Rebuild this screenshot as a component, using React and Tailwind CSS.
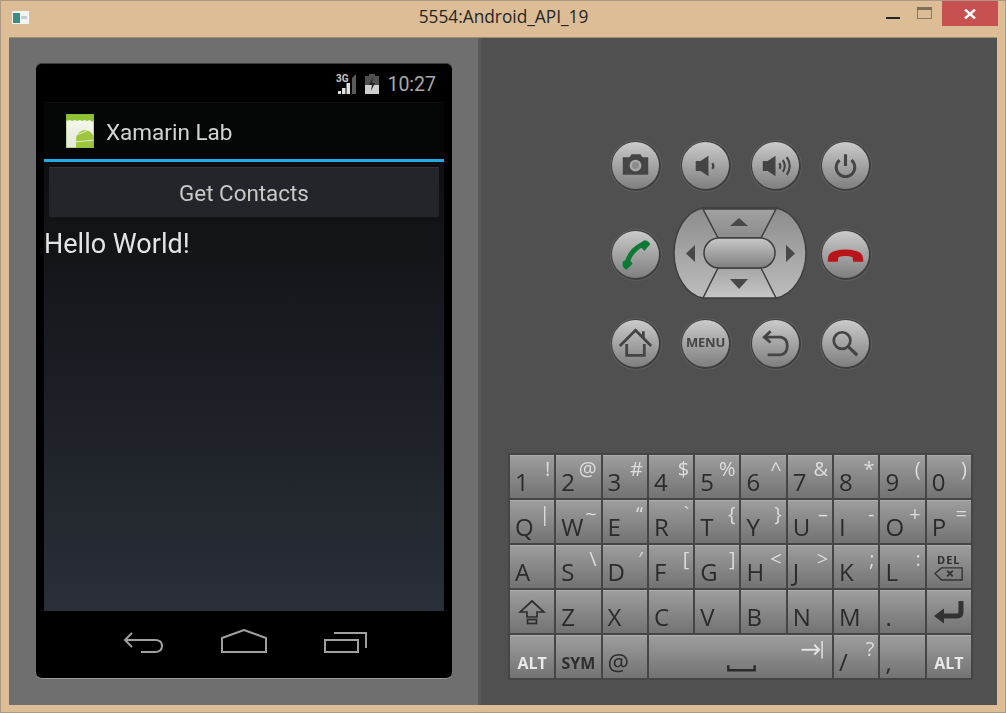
import React from "react";

const Ic = ({ children, className = "" }) => (
  <svg viewBox="0 0 48 48" width="48" height="48" className={className}>{children}</svg>
);

const Round = ({ children }) => (
  <div className="flex items-center justify-center">
    <div className="w-[52px] h-[52px] rounded-full bg-[#5f5f5f] flex items-center justify-center">
      <div className="w-[50px] h-[50px] rounded-full bg-[#3f3f3f] flex items-center justify-center">
        <div className="w-[47px] h-[47px] rounded-full bg-gradient-to-b from-[#cbcbcb] to-[#7f7f7f] flex items-center justify-center">
          {children}
        </div>
      </div>
    </div>
  </div>
);

const Camera = () => (
  <Ic>
    <path d="M11 15h7l2-3h9l2 3h6v18H11z" fill="#454545" />
    <circle cx="24" cy="23.5" r="6" fill="#a8a8a8" />
    <circle cx="24" cy="23.5" r="3.5" fill="#8b8b8b" />
  </Ic>
);
const VolDown = () => (
  <Ic>
    <path d="M14 19h5l8-5.500v21l-8-5.500h-5z" fill="#444" />
    <path d="M31 21q2 3 0 6" stroke="#444" strokeWidth="2.300" fill="none" />
  </Ic>
);
const VolUp = () => (
  <Ic>
    <path d="M11 19h5l8-5.500v21l-8-5.500h-5z" fill="#444" />
    <path d="M28 21q2 3 0 6M31.500 18q4 6 0 12M35.500 15q6 9 0 18" stroke="#444" strokeWidth="2.200" fill="none" />
  </Ic>
);
const Power = () => (
  <Ic>
    <path d="M18 18a9.500 9.500 0 1 0 12 0" stroke="#444" strokeWidth="3" fill="none" />
    <path d="M24 12v12" stroke="#444" strokeWidth="3.200" fill="none" />
  </Ic>
);
const Call = () => (
  <Ic>
    <path d="M15 34Q18 19 32 13" stroke="#0c7a34" strokeWidth="5" fill="none" />
    <path d="M27 13L33 9Q37 9 39 13L33 20Z" fill="#0c7a34" />
    <path d="M11 31L17 27L21 33L15 39Q10 38 11 31Z" fill="#0c7a34" />
  </Ic>
);
const EndCall = () => (
  <Ic>
    <path d="M6 31Q5 22 13 20Q24 17 35 20Q43 22 42 31H32L31 26Q24 24 17 26L16 31Z" fill="#b8141a" />
  </Ic>
);
const Home = () => (
  <Ic>
    <path d="M8 26 24 10l16 16" stroke="#444" strokeWidth="2.800" fill="none" />
    <path d="M32 18v-7" stroke="#444" strokeWidth="2.800" fill="none" />
    <path d="M15 24v11.500h18V24" stroke="#444" strokeWidth="2.800" fill="none" />
  </Ic>
);
const Back = () => (
  <Ic>
    <path d="M19 11l-6.500 6 6.500 5.500" stroke="#444" strokeWidth="2.800" fill="none" />
    <path d="M12.500 17H29q7 1 7 9t-7 9H16" stroke="#444" strokeWidth="2.800" fill="none" />
  </Ic>
);
const Search = () => (
  <Ic>
    <circle cx="20.500" cy="20.500" r="8.500" stroke="#444" strokeWidth="2.800" fill="none" />
    <path d="M27 27l9 8.500" stroke="#444" strokeWidth="3.200" fill="none" />
  </Ic>
);

const DPad = () => (
  <svg viewBox="0 0 134 93" width="134" height="93" className="mt-[-2px] ml-[-2px]">
    <defs>
      <linearGradient id="dl" x1="0" y1="0" x2="0" y2="1">
        <stop offset="0" stopColor="#8c8c8c" />
        <stop offset="1" stopColor="#bdbdbd" />
      </linearGradient>
      <linearGradient id="dt" x1="0" y1="0" x2="0" y2="1">
        <stop offset="0" stopColor="#a2a2a2" />
        <stop offset="1" stopColor="#8b8b8b" />
      </linearGradient>
      <linearGradient id="db" x1="0" y1="0" x2="0" y2="1">
        <stop offset="0" stopColor="#a6a6a6" />
        <stop offset="1" stopColor="#c6c6c6" />
      </linearGradient>
      <linearGradient id="dc" x1="0" y1="0" x2="0" y2="1">
        <stop offset="0" stopColor="#c8c8c8" />
        <stop offset="1" stopColor="#7f7f7f" />
      </linearGradient>
    </defs>
    <path d="M30 1H103C120 4 133 24 133 46C133 68 120 88 103 91H30C13 88 1 68 1 46C1 24 13 4 30 1Z" fill="url(#dl)" stroke="#3f3f3f" strokeWidth="1.500" />
    <path d="M30 2H103L88 31H45Z" fill="url(#dt)" stroke="#3f3f3f" strokeWidth="1.500" />
    <path d="M45 61H88L103 91H30Z" fill="url(#db)" stroke="#3f3f3f" strokeWidth="1.500" />
    <rect x="31" y="31" width="71" height="30" rx="15" fill="url(#dc)" stroke="#3f3f3f" strokeWidth="1.500" />
    <path d="M57 19h18l-9-8zM57 72h18l-9 10zM22 38v17l-9-8.500zM113 38v17l9-8.500z" fill="#484848" />
  </svg>
);

const KEYS = [
  [["1", "!"], ["2", "@"], ["3", "#"], ["4", "$"], ["5", "%"], ["6", "^"], ["7", "&"], ["8", "*"], ["9", "("], ["0", ")"]],
  [["Q", "|"], ["W", "~"], ["E", "“"], ["R", "`"], ["T", "{"], ["Y", "}"], ["U", "–"], ["I", "-"], ["O", "+"], ["P", "="]],
  [["A", ""], ["S", "\\"], ["D", "′"], ["F", "["], ["G", "]"], ["H", "<"], ["J", ">"], ["K", ";"], ["L", ":"]],
  [["Z", ""], ["X", ""], ["C", ""], ["V", ""], ["B", ""], ["N", ""], ["M", ""], [".", ""]],
];

const Key = ({ children, className = "" }) => (
  <div className={`h-[43px] bg-gradient-to-b from-[#9d9d9d] to-[#737373] border-t border-[#adadad] overflow-hidden ${className}`}>
    {children}
  </div>
);

const CharKey = ({ m, a }) => (
  <Key className="flex justify-between pl-[5px] pr-[4px]">
    <span className="self-end pb-[4px] text-[24px] leading-none text-[#2b2b2b]">{m}</span>
    <span className="self-start pt-[3px] text-[20px] leading-none text-[#dcdcdc]">{a}</span>
  </Key>
);

const BoldKey = ({ label, light }) => (
  <Key className="flex items-end justify-center pb-[7px]">
    <span className={`text-[16px] leading-none font-bold ${light ? "text-[#e8e8e8]" : "text-[#2e2e2e]"}`}>{label}</span>
  </Key>
);

const Keyboard = () => (
  <div className="mt-[65px] bg-[#454545] p-[2px] grid grid-cols-10 gap-x-[2px] gap-y-[2px] w-[465px] font-['Open_Sans',sans-serif]">
    {KEYS[0].map(([m, a]) => <CharKey key={m} m={m} a={a} />)}
    {KEYS[1].map(([m, a]) => <CharKey key={m} m={m} a={a} />)}
    {KEYS[2].map(([m, a]) => <CharKey key={m} m={m} a={a} />)}
    <Key className="flex flex-col items-center justify-center">
      <span className="text-[11px] leading-none font-bold text-[#2e2e2e] tracking-[1px]">DEL</span>
      <svg viewBox="0 0 32 16" width="30" height="15" className="mt-[1px]">
        <path d="M1 8l7-6h22v13H8z" fill="none" stroke="#333" strokeWidth="1.500" />
        <path d="M14 5l6 6M20 5l-6 6" stroke="#333" strokeWidth="2" />
      </svg>
    </Key>
    <Key className="flex items-center justify-center">
      <svg viewBox="0 0 28 28" width="28" height="28">
        <path d="M14 3L2 14h7v5h10v-5h7z" fill="none" stroke="#2e2e2e" strokeWidth="1.700" />
        <rect x="9.500" y="21.500" width="9" height="4" fill="none" stroke="#2e2e2e" strokeWidth="1.700" />
      </svg>
    </Key>
    {KEYS[3].map(([m]) => <CharKey key={m} m={m} a="" />)}
    <Key className="flex items-center justify-center">
      <svg viewBox="0 0 32 28" width="32" height="28">
        <path d="M28 3v11q0 4-4 4H8" fill="none" stroke="#333" strokeWidth="5" />
        <path d="M1 18l10-7.500v15z" fill="#333" />
      </svg>
    </Key>
    <BoldKey label="ALT" light />
    <BoldKey label="SYM" />
    <CharKey m="@" a="" />
    <Key className="col-span-4 flex flex-col items-center">
      <svg viewBox="0 0 184 43" width="184" height="43">
        <path d="M79 30v5h27v-5" fill="none" stroke="#2b2b2b" strokeWidth="2.500" />
        <path d="M154 14h18M167 9l5 5-5 5" fill="none" stroke="#e4e4e4" strokeWidth="2" />
        <path d="M175 5v18" stroke="#e4e4e4" strokeWidth="1.500" />
      </svg>
    </Key>
    <CharKey m="/" a="?" />
    <CharKey m="," a="" />
    <BoldKey label="ALT" light />
  </div>
);

const StatusBar = () => (
  <div className="h-[38px] flex items-center justify-end pr-[8px] gap-[7px] font-['Roboto',sans-serif]">
    <svg viewBox="0 0 22 22" width="22" height="22" className="mt-[2px]">
      <text x="0" y="9" fontSize="10" fontWeight="700" fill="#c8c8c8" fontFamily="Roboto">3G</text>
      <path d="M2 21h3v-3H2zM6 21h3.500v-6H6zM10.500 21H14V10h-3.500z" fill="#e0e0e0" />
      <path d="M16 21h4V1l-4 4z" fill="#5a5a5a" />
    </svg>
    <svg viewBox="0 0 14 20" width="14" height="20" className="mt-[2px]">
      <path d="M4 0h6v2h4v18H0V2h4z" fill="#505050" />
      <path d="M0 11h14v9H0z" fill="#cfcfcf" />
      <path d="M8 3L4 11h3l-1 6 4-8H7z" fill="#222" />
    </svg>
    <span className="ml-[1px] text-[19.500px] leading-none text-[#a8a8a8] mt-[3px]">10:27</span>
  </div>
);

const AppIcon = () => (
  <svg viewBox="0 0 28 34" width="28" height="34">
    <defs>
      <linearGradient id="ai" x1="0" y1="0" x2="0" y2="1">
        <stop offset="0" stopColor="#f8faf0" />
        <stop offset="1" stopColor="#e2e8d8" />
      </linearGradient>
    </defs>
    <rect width="28" height="34" fill="url(#ai)" />
    <path d="M0 0h28v6l-2 2-2-2-3 1-2-1-3 1-2-1-3 1-2-1-3 1-2-1-4 1z" fill="#8fc137" />
    <circle cx="19" cy="25" r="9" fill="#9dc63e" />
    <path d="M10 27h18v7H10z" fill="#9dc63e" />
    <path d="M8 22l20-8" stroke="#e8efd8" strokeWidth="0.900" />
    <path d="M10 28l18-2" stroke="#e8efd8" strokeWidth="0.900" />
    <path d="M0 0h28v34H0z" fill="none" stroke="#7fae2e" strokeWidth="0.800" />
  </svg>
);

const NavBar = () => (
  <div className="h-[67px] flex items-start justify-center pt-[20px] gap-[57px]">
    <svg viewBox="0 0 41 22" width="41" height="22" className="ml-[2px]">
      <path d="M9 2 2 9l7 7" fill="none" stroke="#a0a0a0" strokeWidth="2" />
      <path d="M2 9h30q7 0 7 6t-7 6H18" fill="none" stroke="#a0a0a0" strokeWidth="2" />
    </svg>
    <svg viewBox="0 0 46 24" width="46" height="24" className="mt-[-2px] ml-[0px]">
      <path d="M1 9 23 1l22 8v14H1z" fill="none" stroke="#a0a0a0" strokeWidth="2" />
    </svg>
    <svg viewBox="0 0 44 22" width="44" height="22">
      <path d="M10 2h32v15" fill="none" stroke="#a0a0a0" strokeWidth="2" />
      <path d="M1 9h33v12H1z" fill="none" stroke="#a0a0a0" strokeWidth="2" />
    </svg>
  </div>
);

const Phone = () => (
  <div className="w-[416px] h-[616px] bg-black rounded-[6px] border-t border-[#3c3c3c] border-b-[1px] border-b-[#9a9a9a] px-[8px] flex flex-col">
    <StatusBar />
    <div className="h-[509px] flex flex-col bg-gradient-to-b from-[#0a0b0d] to-[#2a2f38] font-['Roboto',sans-serif]">
      <div className="h-[57px] bg-[#040505] border-t border-[#0e0e0e] flex items-center pl-[22px] gap-[12px]">
        <AppIcon />
        <span className="text-[22.500px] leading-none text-[#d4d4d4] pt-[3px]">Xamarin Lab</span>
      </div>
      <div className="h-[3px] bg-[#27a9e1]" />
      <div className="h-[50px] mx-[5px] mt-[5px] bg-[#22262a] border-t border-[#30343a] flex items-center justify-center">
        <span className="text-[22.400px] leading-none text-[#c8c8c8] pt-[2px]">Get Contacts</span>
      </div>
      <div className="pt-[10px] text-[27px] leading-[34px] text-[#e4e4e4]">Hello World!</div>
    </div>
    <NavBar />
  </div>
);

const Controls = () => (
  <div className="mt-[83px] grid grid-cols-[70px_70px_70px_70px] grid-rows-[89px_89px_89px] font-['Open_Sans',sans-serif]">
    <Round><Camera /></Round>
    <Round><VolDown /></Round>
    <Round><VolUp /></Round>
    <Round><Power /></Round>
    <Round><Call /></Round>
    <div className="col-span-2 flex items-center justify-center"><DPad /></div>
    <Round><EndCall /></Round>
    <Round><Home /></Round>
    <Round><span className="text-[13px] font-bold leading-none text-[#454545] tracking-[-0.2px] mt-[-2px]">MENU</span></Round>
    <Round><Back /></Round>
    <Round><Search /></Round>
  </div>
);

export default function App() {
  return (
    <div className="w-[1006px] h-[713px] bg-[#dcbd96] border border-[#ab9a80] flex flex-col overflow-hidden">
      <div className="h-[36px] shrink-0 grid grid-cols-[1fr_auto_1fr] pl-[11px] pr-[7px]">
        <div className="pt-[10px]">
          <svg viewBox="0 0 17 13" width="17" height="13">
            <rect width="17" height="13" fill="#f2f4f4" />
            <rect x="1" y="2" width="7" height="10" fill="#3b8a86" />
            <rect x="9" y="5" width="6" height="3" fill="#c5cfd0" />
          </svg>
        </div>
        <div className="pt-[5px] mr-[3px] text-[17.300px] leading-[22px] text-[#252525] font-['Open_Sans',sans-serif]">5554:Android_API_19</div>
        <div className="flex justify-end items-start">
          <svg viewBox="0 0 14 2" width="14" height="2" className="mt-[16px] mr-[17px]"><rect width="14" height="2" fill="#222" /></svg>
          <svg viewBox="0 0 15 12" width="15" height="12" className="mt-[6px] mr-[10px]">
            <rect x="0.500" y="0.500" width="14" height="11" fill="none" stroke="#8a7a62" />
            <rect width="15" height="3" fill="#7d6f58" />
          </svg>
          <div className="w-[56px] h-[25px] bg-[#c75050] flex items-center justify-center">
            <svg viewBox="0 0 12 10" width="12" height="10"><path d="M1 0.500l10 9M11 0.500l-10 9" stroke="#fff" strokeWidth="2.400" /></svg>
          </div>
        </div>
      </div>
      <div className="ml-[8px] w-[988px] h-[668px] flex border-t border-[#a08c70]">
        <div className="w-[469px] bg-[#6f6f6f] pl-[27px] pt-[25px]">
          <div className="blur-[0.4px]"><Phone /></div>
        </div>
        <div className="w-[3px] bg-[#5a5a5a]" />
        <div className="flex-1 bg-[#505050] flex flex-col items-center pl-[3px]">
          <div className="blur-[0.4px] flex flex-col items-center">
            <Controls />
            <Keyboard />
          </div>
        </div>
      </div>
    </div>
  );
}
